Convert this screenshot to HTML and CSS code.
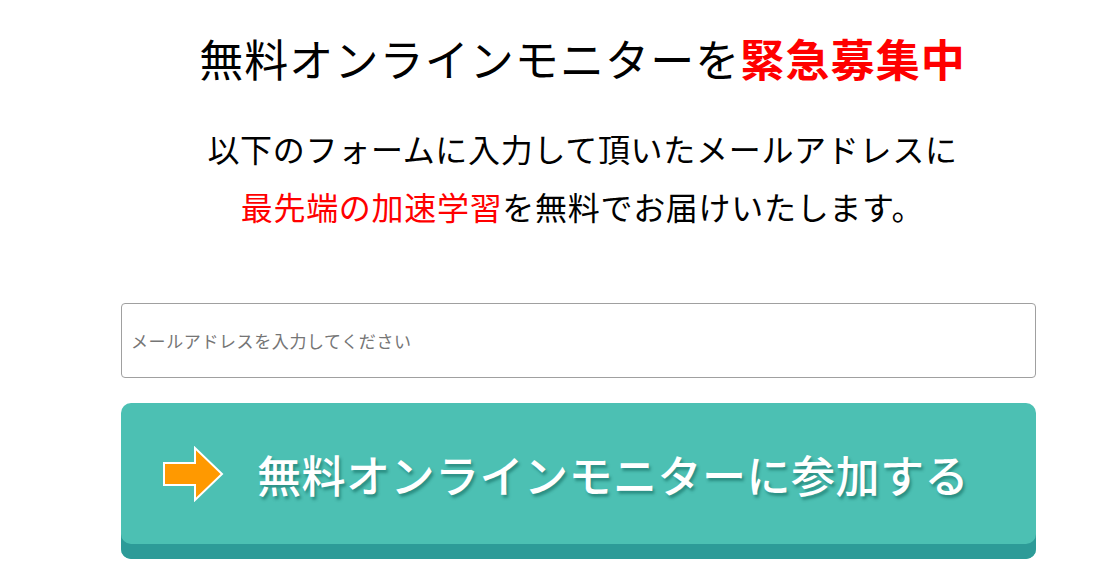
FILE: index.html
```html
<!DOCTYPE html>
<html lang="ja">
<head>
    <meta charset="UTF-8">
    <title>無料オンラインモニター</title>
    <link rel="stylesheet" href="styles.css">
</head>
<body>
    <div class="wrap">
        <h1 class="title">無料オンラインモニターを<span class="urgent">緊急募集中</span></h1>
        <p class="lead">以下のフォームに入力して頂いたメールアドレスに<br><span class="red">最先端の加速学習</span>を無料でお届けいたします。</p>

        <form class="form">
            <input class="mail" type="text" placeholder="メールアドレスを入力してください">
            <button class="join" type="button">
                <svg class="arrow" width="62" height="56" viewBox="0 0 62 56">
                    <path d="M2 17 H33 V2 L60 28 L33 54 V39 H2 Z" fill="#ff9900" stroke="#ffffff" stroke-width="2" stroke-linejoin="miter"/>
                </svg>
                <span class="label">無料オンラインモニターに参加する</span>
            </button>
        </form>
    </div>
</body>
</html>
```

FILE: styles.css
```css
body, html {
    margin: 0;
    padding: 0;
    background-color: white;
}
body {
    font-family: "Noto Sans CJK JP", "Noto Sans", sans-serif;
    color: #000;
}
.wrap {
    width: 915px;
    margin-left: 121px;
    padding-top: 27px;
}
.title {
    margin: 0;
    padding-left: 8px;
    text-align: center;
    font-size: 44px;
    font-weight: normal;
    line-height: 62px;
    letter-spacing: 1.1px;
}
.urgent {
    color: #ff0000;
    font-weight: bold;
}
.lead {
    margin: 30px 0 0;
    padding-left: 8px;
    text-align: center;
    font-size: 32px;
    line-height: 58px;
    letter-spacing: 0.7px;
}
.red {
    color: #ff0000;
}
.form {
    margin-top: 68px;
    display: flex;
    flex-direction: column;
    gap: 25px;
}
.mail {
    box-sizing: border-box;
    width: 100%;
    height: 75px;
    border: 1px solid #a0a0a0;
    border-radius: 4px;
    padding: 0 9px;
    font-family: inherit;
    font-size: 17px;
    letter-spacing: 0.6px;
    outline: none;
}
.mail::placeholder {
    color: #757575;
}
.join {
    box-sizing: border-box;
    width: 100%;
    height: 156px;
    border: none;
    border-radius: 10px;
    background-color: #4cc0b3;
    box-shadow: inset 0 -15px 0 #2d9b98;
    display: flex;
    align-items: center;
    padding: 0 0 15px 41px;
    gap: 33px;
    cursor: pointer;
    font-family: inherit;
}
.arrow {
    display: block;
    flex-shrink: 0;
}
.label {
    color: #ffffff;
    font-size: 44px;
    font-weight: 500;
    letter-spacing: 0.5px;
    text-shadow: 2px 3px 3px rgba(0, 80, 70, 0.45);
}
```
